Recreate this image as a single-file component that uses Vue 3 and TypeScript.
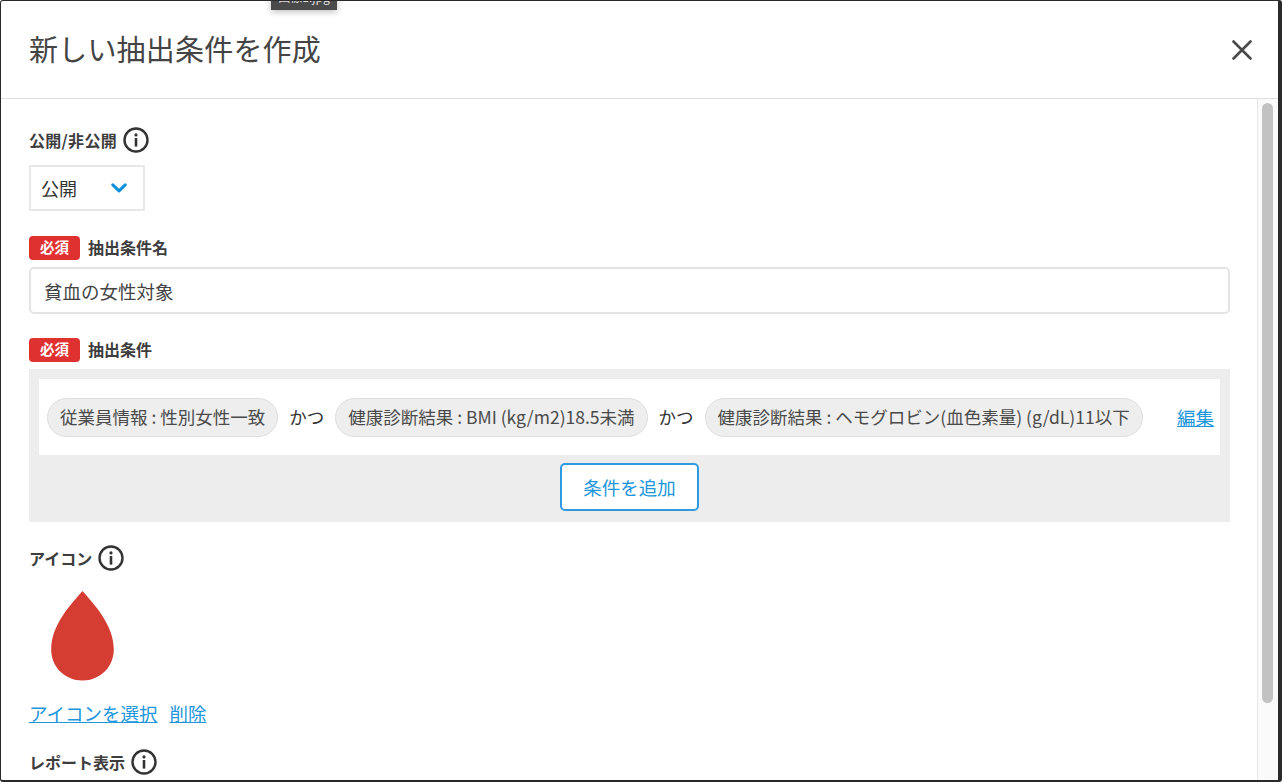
<script setup lang="ts">
interface Chip { text: string }
const chips: Chip[] = [
  { text: '従業員情報 : 性別女性一致' },
  { text: '健康診断結果 : BMI (kg/m2)18.5未満' },
  { text: '健康診断結果 : ヘモグロビン(血色素量) (g/dL)11以下' },
]
</script>

<template>
  <div class="window">
    <div class="tooltip">画像1.jpg</div>
    <header class="head">
      <h1 class="title">新しい抽出条件を作成</h1>
      <svg class="close" viewBox="0 0 20 20" width="20" height="20" aria-label="閉じる">
        <path d="M1.500 1.500 18.500 18.500M18.500 1.500 1.500 18.500" fill="none" stroke="#4a4a4a" stroke-width="2.600" stroke-linecap="round" />
      </svg>
    </header>
    <div class="main">
      <div class="body">
        <section class="field-a">
          <div class="label label-wide">公開/非公開
            <svg class="info" viewBox="0 0 26 26" width="26" height="26">
              <circle cx="13" cy="13" r="11.500" fill="none" stroke="#333" stroke-width="2.400" />
              <circle cx="13" cy="7.900" r="1.600" fill="#333" />
              <rect x="11.700" y="11" width="2.600" height="8.600" fill="#333" />
            </svg>
          </div>
          <div class="select">
            <span>公開</span>
            <svg viewBox="0 0 16 10" width="16" height="10">
              <path d="M1.800 1.800 8 7.800 14.200 1.800" fill="none" stroke="#0b8fdc" stroke-width="3" stroke-linecap="round" stroke-linejoin="round" />
            </svg>
          </div>
        </section>
        <section class="field-b">
          <div class="label-req"><span class="req">必須</span><span class="label-text">抽出条件名</span></div>
          <div class="input">貧血の女性対象</div>
        </section>
        <section class="field-c">
          <div class="label-req"><span class="req">必須</span><span class="label-text">抽出条件</span></div>
          <div class="panel">
            <div class="cond">
              <template v-for="(chip, i) in chips" :key="chip.text">
                <span v-if="i > 0" class="and">かつ</span>
                <span class="chip">{{ chip.text }}</span>
              </template>
              <a class="link edit">編集</a>
            </div>
            <div class="btn-row"><button class="btn" type="button">条件を追加</button></div>
          </div>
        </section>
        <section class="field-d">
          <div class="label">アイコン
            <svg class="info" viewBox="0 0 26 26" width="26" height="26">
              <circle cx="13" cy="13" r="11.500" fill="none" stroke="#333" stroke-width="2.400" />
              <circle cx="13" cy="7.900" r="1.600" fill="#333" />
              <rect x="11.700" y="11" width="2.600" height="8.600" fill="#333" />
            </svg>
          </div>
          <svg class="drop" viewBox="0 0 63 90" width="63" height="90">
            <path d="M31.500 0C43 13 62.800 34 62.800 58.500 62.800 76 49 89.500 31.500 89.500 14 89.500.2 76 .2 58.500.2 34 20 13 31.500 0Z" fill="#d53d33" />
          </svg>
          <div class="links"><a class="link">アイコンを選択</a><a class="link">削除</a></div>
        </section>
        <section class="field-e">
          <div class="label">レポート表示
            <svg class="info" viewBox="0 0 26 26" width="26" height="26">
              <circle cx="13" cy="13" r="11.500" fill="none" stroke="#333" stroke-width="2.400" />
              <circle cx="13" cy="7.900" r="1.600" fill="#333" />
              <rect x="11.700" y="11" width="2.600" height="8.600" fill="#333" />
            </svg>
          </div>
        </section>
      </div>
      <div class="scrollbar"><div class="thumb"></div></div>
    </div>
  </div>
</template>

<style>
html, body { margin: 0; background: #fff; overflow: hidden; }
</style>

<style scoped>
.window {
  position: relative;
  box-sizing: border-box;
  width: 1282px;
  height: 782px;
  border: solid #2a2a2a;
  border-width: 1px 4px 2px 1px;
  border-radius: 3px;
  background: #fff;
  color: #333;
  font-family: "Noto Sans CJK JP", "Noto Sans", sans-serif;
  overflow: hidden;
  display: flex;
  flex-direction: column;
}
.tooltip {
  position: absolute;
  left: 270px;
  top: -12px;
  width: 66px;
  height: 21px;
  background: #4a4a4a;
  color: #ddd;
  font-size: 12px;
  line-height: 16px;
  text-align: center;
  box-shadow: 0 2px 6px rgba(0, 0, 0, .25);
}
.head {
  height: 98px;
  flex: none;
  box-sizing: border-box;
  border-bottom: 1px solid #e0e0e0;
  display: flex;
  align-items: center;
  justify-content: space-between;
  padding: 0 26px 0 28px;
}
.title {
  margin: 0 0 3px;
  font-size: 29px;
  font-weight: 400;
  line-height: 40px;
  letter-spacing: .2px;
  color: #444;
}
.main { flex: 1; display: flex; min-height: 0; }
.body { flex: 1; min-width: 0; padding: 0 27px 0 28px; overflow: hidden; }
.scrollbar {
  flex: none;
  width: 21px;
  box-sizing: border-box;
  background: #fafafa;
  border-left: 1px solid #e8e8e8;
  padding: 4px 0 0 4px;
}
.thumb { width: 11px; height: 600px; border-radius: 6px; background: #c2c2c2; }
.label {
  display: flex;
  align-items: center;
  gap: 6px;
  font-size: 16px;
  font-weight: 700;
  line-height: 26px;
  color: #3d3d3d;
}
.label-wide { letter-spacing: .3px; }
.field-a { padding-top: 28px; }
.select {
  margin-top: 12px;
  box-sizing: border-box;
  width: 116px;
  height: 46px;
  border: 2px solid #e8e8e8;
  padding: 0 16px 0 10px;
  display: flex;
  align-items: center;
  justify-content: space-between;
  font-size: 18px;
}
.field-b { margin-top: 25px; }
.label-req { display: flex; align-items: center; gap: 8px; height: 24px; }
.req {
  width: 51px;
  height: 24px;
  border-radius: 4px;
  background: #e03131;
  color: #fff;
  font-size: 14.500px;
  font-weight: 700;
  line-height: 22px;
  text-align: center;
}
.label-text { font-size: 16px; font-weight: 700; line-height: 22px; padding-bottom: 2px; color: #3d3d3d; }
.input {
  margin-top: 7px;
  box-sizing: border-box;
  height: 47px;
  border: 2px solid #e4e4e4;
  border-radius: 5px;
  padding: 0 13px;
  font-size: 18.500px;
  line-height: 45px;
  color: #444;
}
.field-c { margin-top: 24px; }
.panel { margin-top: 7px; background: #ededed; padding: 10px 10px 11px; }
.cond {
  background: #fff;
  height: 76px;
  box-sizing: border-box;
  padding: 0 6px 0 8px;
  display: flex;
  align-items: center;
}
.chip {
  box-sizing: border-box;
  height: 39px;
  border: 1px solid #dedede;
  border-radius: 20px;
  background: #eee;
  padding: 0 12px;
  font-size: 17.500px;
  line-height: 35px;
  white-space: nowrap;
  color: #4a4a4a;
}
.and { margin: 0 11px; font-size: 17.500px; line-height: 35px; padding-bottom: 2px; white-space: nowrap; }
.edit { margin-left: auto; }
.link { font-size: 18.500px; line-height: 24px; color: #2196dc; text-decoration: underline; white-space: nowrap; }
.btn-row { display: flex; justify-content: center; margin-top: 8px; }
.btn {
  box-sizing: border-box;
  width: 139px;
  height: 48px;
  border: 2px solid #2f9ae0;
  border-radius: 5px;
  background: #fff;
  color: #2196dc;
  font-family: inherit;
  font-size: 18.500px;
}
.field-d { margin-top: 23px; }
.drop { display: block; margin: 20px 0 0 22px; }
.links { display: flex; gap: 12px; margin-top: 20px; }
.field-e { margin-top: 24px; }
</style>
